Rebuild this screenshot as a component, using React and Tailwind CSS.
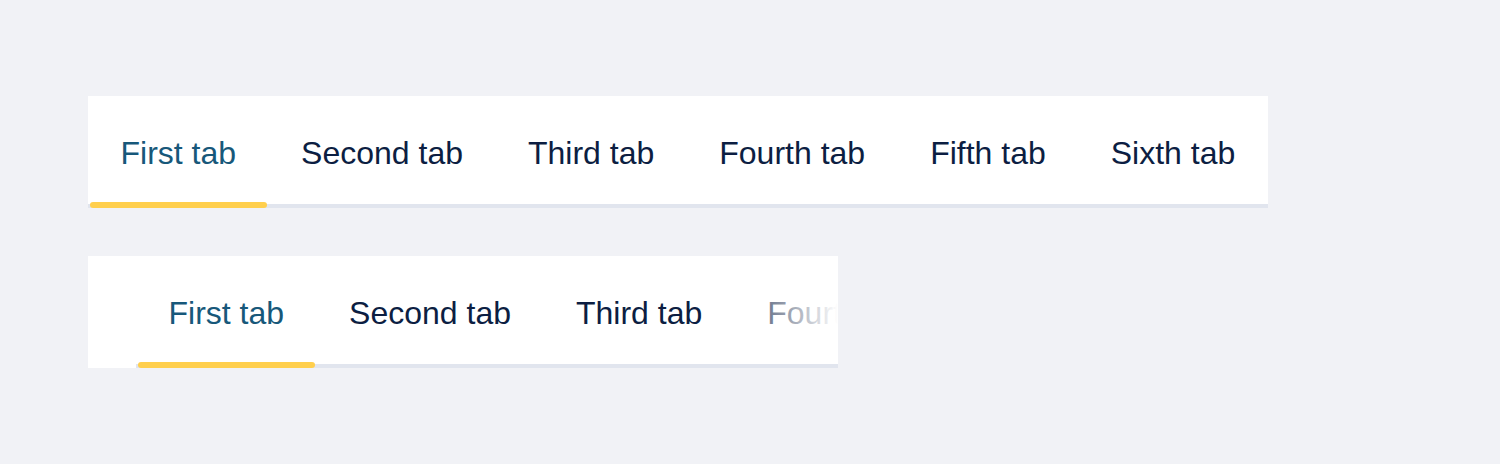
import { useState } from 'react'

const TABS = ['First tab', 'Second tab', 'Third tab', 'Fourth tab', 'Fifth tab', 'Sixth tab']

function Tab({ label, active, onClick }) {
  return (
    <button
      onClick={onClick}
      className={`relative flex shrink-0 items-start h-[108px] px-[32.5px] pt-[39px] leading-[36px] text-[32px] whitespace-nowrap ${active ? 'text-[#17587a]' : 'text-[#0c1e42]'}`}
    >
      {label}
      {active && (
        <span className="absolute left-[2px] right-[2px] bottom-[-4px] h-[6px] rounded-full bg-[#ffcf4d]" />
      )}
    </button>
  )
}

export default function App() {
  const [tabA, setTabA] = useState(0)
  const [tabB, setTabB] = useState(0)

  return (
    <div className="min-h-screen bg-[#f1f2f6] pt-[96px] pl-[88px] font-['Liberation_Sans',Arial,sans-serif]">
      {/* Full tab bar */}
      <div className="inline-flex bg-white border-b-4 border-[#e1e5ee]">
        {TABS.map((t, i) => (
          <Tab key={t} label={t} active={tabA === i} onClick={() => setTabA(i)} />
        ))}
      </div>

      {/* Scrollable tab bar, clipped */}
      <div className="mt-[48px] flex w-[750px] bg-white">
        <div className="w-[48px] shrink-0" />
        <div className="relative flex-1 overflow-hidden">
          <div className="flex border-b-4 border-[#e1e5ee]">
            {TABS.map((t, i) => (
              <Tab key={t} label={t} active={tabB === i} onClick={() => setTabB(i)} />
            ))}
          </div>
          <div className="pointer-events-none absolute right-0 top-0 h-[108px] w-[120px] bg-linear-to-l from-white to-white/0" />
        </div>
      </div>
    </div>
  )
}
